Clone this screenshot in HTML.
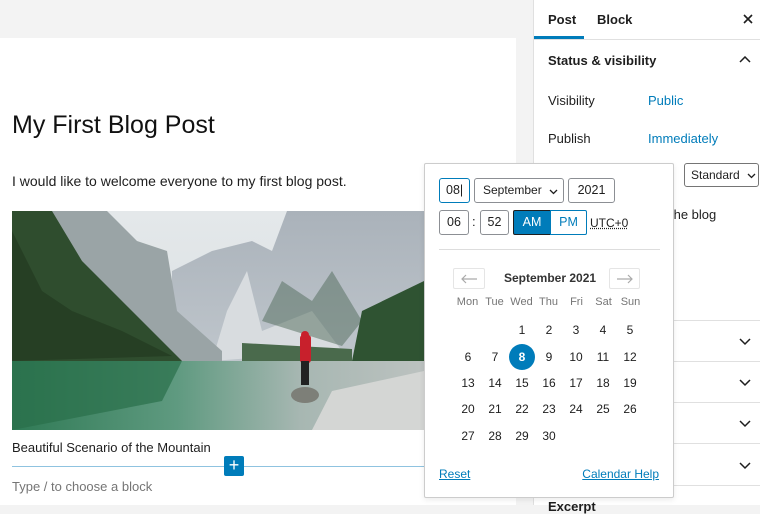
<!DOCTYPE html>
<html><head><meta charset="utf-8"><style>
*{box-sizing:border-box;margin:0;padding:0}
body{width:760px;height:505px;overflow:hidden;background:#f3f3f3;font-family:"Liberation Sans",sans-serif;color:#1e1e1e;position:relative;font-size:13px}
.a{position:absolute}
.canvas{left:0;top:38px;width:516px;height:467px;background:#fff}
.side{left:533px;top:0;width:227px;height:505px;background:#fff;border-left:1px solid #e0e0e0}
.hr{position:absolute;left:0;right:0;height:1px;background:#e0e0e0}
.chev{position:absolute;right:9px;width:12px;height:8px}
.blue{color:#007cba}
.box{position:absolute;border:1px solid #8c8f94;border-radius:3px;height:25px;font-size:12.5px;line-height:23px;text-align:center;background:#fff;white-space:nowrap}
.pop{left:424px;top:163px;width:250px;height:335px;background:#fff;border:1px solid #ccc;border-radius:2px;box-shadow:0 2px 6px rgba(0,0,0,.08)}
.d{position:absolute;width:26px;text-align:center;font-size:12px;color:#1e1e1e}
.w{position:absolute;width:27px;text-align:center;font-size:11px;color:#757575}
</style></head><body>
<div class="a canvas"></div>
<div class="a" style="left:12px;top:111px;font-size:25px;color:#111">My First Blog Post</div>
<div class="a" style="left:12px;top:173px;font-size:14px">I would like to welcome everyone to my first blog post.</div>
<svg class="a" style="left:12px;top:211px" width="412" height="219" viewBox="0 0 412 219">
<defs>
<linearGradient id="sky" x1="0" y1="0" x2="0" y2="1"><stop offset="0" stop-color="#e4e8ea"/><stop offset="1" stop-color="#d6dde0"/></linearGradient>
<linearGradient id="mt" x1="0" y1="0" x2="0" y2="1"><stop offset="0" stop-color="#aab2ba"/><stop offset="1" stop-color="#bfc6cc"/></linearGradient>
<linearGradient id="wat" x1="0" y1="0" x2="1" y2="0"><stop offset="0" stop-color="#2f7a55"/><stop offset=".4" stop-color="#5f9a80"/><stop offset=".7" stop-color="#a7b7b2"/><stop offset="1" stop-color="#bcc2c0"/></linearGradient>
</defs>
<rect width="412" height="219" fill="url(#sky)"/>
<path d="M160 60 L200 40 L240 30 L260 40 L275 0 L412 0 L412 150 L160 150Z" fill="url(#mt)"/>
<path d="M215 100 L235 60 L250 120 L300 100 L330 140 L200 150Z" fill="#d8dcdf"/>
<path d="M250 110 L270 70 L300 90 L320 60 L350 110 L330 135 Z" fill="#4f6a5a" opacity=".5"/>
<path d="M0 0 L95 0 L125 30 L155 40 L165 100 L210 140 L210 150 L0 150Z" fill="#9aa4a6"/>
<path d="M0 0 L40 0 L70 50 L110 90 L150 130 L170 150 L0 150Z" fill="#2f4d2e"/>
<path d="M0 20 L30 80 L60 100 L110 120 L160 145 L0 150Z" fill="#263f24"/>
<path d="M350 100 L412 70 L412 150 L340 150Z" fill="#2f5332"/>
<path d="M230 132 L340 138 L340 150 L230 150Z" fill="#4a6a4c"/>
<rect y="150" width="412" height="69" fill="url(#wat)"/>
<path d="M0 150 L170 150 L150 190 L0 219Z" fill="#2a6f4a" opacity=".7"/>
<path d="M300 219 L320 180 L412 160 L412 219Z" fill="#d4d6d4"/>
<rect x="288" y="124" width="11" height="28" fill="#c8202c" rx="3"/>
<circle cx="293" cy="124" r="4" fill="#c8202c"/>
<rect x="289" y="150" width="8" height="24" fill="#222"/>
<ellipse cx="293" cy="184" rx="14" ry="8" fill="#7d7f78"/>
</svg>
<div class="a" style="left:12px;top:440px;font-size:13px">Beautiful Scenario of the Mountain</div>
<div class="a" style="left:12px;top:466px;width:412px;height:1px;background:#8fc3e0"></div>
<div class="a" style="left:224px;top:456px;width:20px;height:20px;background:#007cba;border-radius:2px;color:#fff;font-size:18px;line-height:19px;text-align:center">+</div>
<div class="a" style="left:12px;top:479px;font-size:13px;color:#757575">Type / to choose a block</div>

<div class="a side">
 <div class="a" style="left:14px;top:12px;font-weight:bold">Post</div>
 <div class="a" style="left:63px;top:12px;font-weight:bold">Block</div>
 <svg class="a" style="left:209px;top:14px" width="10" height="10"><path d="M1 1L9 9M9 1L1 9" stroke="#1e1e1e" stroke-width="1.6"/></svg>
 <div class="a" style="left:0;top:36px;width:50px;height:3px;background:#007cba"></div>
 <div class="hr" style="top:39px"></div>
 <div class="a" style="left:14px;top:53px;font-weight:bold">Status &amp; visibility</div>
 <svg class="chev" style="top:56px"><path d="M1 6L6 1L11 6" fill="none" stroke="#1e1e1e" stroke-width="1.5"/></svg>
 <div class="a" style="left:14px;top:93px">Visibility</div>
 <div class="a blue" style="left:114px;top:93px">Public</div>
 <div class="a" style="left:14px;top:131px">Publish</div>
 <div class="a blue" style="left:114px;top:131px">Immediately</div>
 <div class="box" style="left:150px;top:163px;width:75px;height:24px;line-height:22px;text-align:left;padding-left:6px;border-color:#757575;font-size:12px">Standard
  <svg style="position:absolute;left:62px;top:9px" width="9" height="6"><path d="M1 1L4.5 4.5L8 1" fill="none" stroke="#1e1e1e" stroke-width="1.3"/></svg></div>
 <div class="a" style="left:136px;top:207px">the blog</div>
 <div class="hr" style="top:320px"></div><svg class="chev" style="top:338px"><path d="M1 1L6 6L11 1" fill="none" stroke="#1e1e1e" stroke-width="1.5"/></svg>
 <div class="hr" style="top:361px"></div><svg class="chev" style="top:379px"><path d="M1 1L6 6L11 1" fill="none" stroke="#1e1e1e" stroke-width="1.5"/></svg>
 <div class="hr" style="top:402px"></div><svg class="chev" style="top:420px"><path d="M1 1L6 6L11 1" fill="none" stroke="#1e1e1e" stroke-width="1.5"/></svg>
 <div class="hr" style="top:443px"></div><svg class="chev" style="top:462px"><path d="M1 1L6 6L11 1" fill="none" stroke="#1e1e1e" stroke-width="1.5"/></svg>
 <div class="hr" style="top:485px"></div>
 <div class="a" style="left:14px;top:499px;font-weight:bold">Excerpt</div>
</div>

<div class="a pop">
 <div class="box" style="left:14px;top:14px;width:31px;border:1.5px solid #007cba;text-align:left;padding-left:6px">08|</div>
 <div class="box" style="left:49px;top:14px;width:90px;text-align:left;padding-left:8px;font-size:12px">September
  <svg style="position:absolute;left:74px;top:10px" width="9" height="6"><path d="M1 1L4.5 4.5L8 1" fill="none" stroke="#1e1e1e" stroke-width="1.3"/></svg></div>
 <div class="box" style="left:143px;top:14px;width:47px">2021</div>
 <div class="box" style="left:14px;top:46px;width:30px">06</div>
 <div class="a" style="left:47px;top:50px">:</div>
 <div class="box" style="left:55px;top:46px;width:29px">52</div>
 <div class="box" style="left:88px;top:46px;width:38px;background:#007cba;color:#fff;border-color:#1e1e1e;border-radius:2px 0 0 2px">AM</div>
 <div class="box" style="left:125px;top:46px;width:37px;color:#007cba;border-color:#007cba;border-radius:0 2px 2px 0">PM</div>
 <div class="a" style="left:165px;top:52px;font-size:12px;text-decoration:underline dotted">UTC+0</div>
 <div class="a" style="left:14px;top:85px;width:221px;height:1px;background:#ddd"></div>
 <div class="a" style="left:28px;top:104px;width:32px;height:21px;border:1px solid #e5e5e5;border-radius:2px"><svg style="position:absolute;left:7px;top:5px" width="17" height="10"><path d="M16 5H1M5 1L1 5L5 9" fill="none" stroke="#aaa" stroke-width="1.2"/></svg></div>
 <div class="a" style="left:79px;top:107px;font-size:12px;font-weight:bold;color:#333">September 2021</div>
 <div class="a" style="left:184px;top:104px;width:31px;height:21px;border:1px solid #e5e5e5;border-radius:2px"><svg style="position:absolute;left:6px;top:5px" width="17" height="10"><path d="M1 5H16M12 1L16 5L12 9" fill="none" stroke="#aaa" stroke-width="1.2"/></svg></div>
 <div class="w" style="left:29px;top:132px">Mon</div><div class="w" style="left:56px;top:132px">Tue</div><div class="w" style="left:83px;top:132px">Wed</div><div class="w" style="left:110px;top:132px">Thu</div><div class="w" style="left:138px;top:132px">Fri</div><div class="w" style="left:165px;top:132px">Sat</div><div class="w" style="left:192px;top:132px">Sun</div>
 <div class="a" style="left:84px;top:180px;width:26px;height:26px;border-radius:50%;background:#007cba"></div>
 <div class="d" style="left:84px;top:159px">1</div><div class="d" style="left:111px;top:159px">2</div><div class="d" style="left:138px;top:159px">3</div><div class="d" style="left:165px;top:159px">4</div><div class="d" style="left:192px;top:159px">5</div>
 <div class="d" style="left:30px;top:186px">6</div><div class="d" style="left:57px;top:186px">7</div><div class="d" style="left:84px;top:186px;color:#fff;font-weight:bold">8</div><div class="d" style="left:111px;top:186px">9</div><div class="d" style="left:138px;top:186px">10</div><div class="d" style="left:165px;top:186px">11</div><div class="d" style="left:192px;top:186px">12</div>
 <div class="d" style="left:30px;top:212px">13</div><div class="d" style="left:57px;top:212px">14</div><div class="d" style="left:84px;top:212px">15</div><div class="d" style="left:111px;top:212px">16</div><div class="d" style="left:138px;top:212px">17</div><div class="d" style="left:165px;top:212px">18</div><div class="d" style="left:192px;top:212px">19</div>
 <div class="d" style="left:30px;top:238px">20</div><div class="d" style="left:57px;top:238px">21</div><div class="d" style="left:84px;top:238px">22</div><div class="d" style="left:111px;top:238px">23</div><div class="d" style="left:138px;top:238px">24</div><div class="d" style="left:165px;top:238px">25</div><div class="d" style="left:192px;top:238px">26</div>
 <div class="d" style="left:30px;top:265px">27</div><div class="d" style="left:57px;top:265px">28</div><div class="d" style="left:84px;top:265px">29</div><div class="d" style="left:111px;top:265px">30</div>
 <div class="a blue" style="left:14px;top:303px;font-size:12px;text-decoration:underline">Reset</div>
 <div class="a blue" style="right:14px;top:303px;font-size:12px;text-decoration:underline">Calendar Help</div>
</div>
</body></html>
